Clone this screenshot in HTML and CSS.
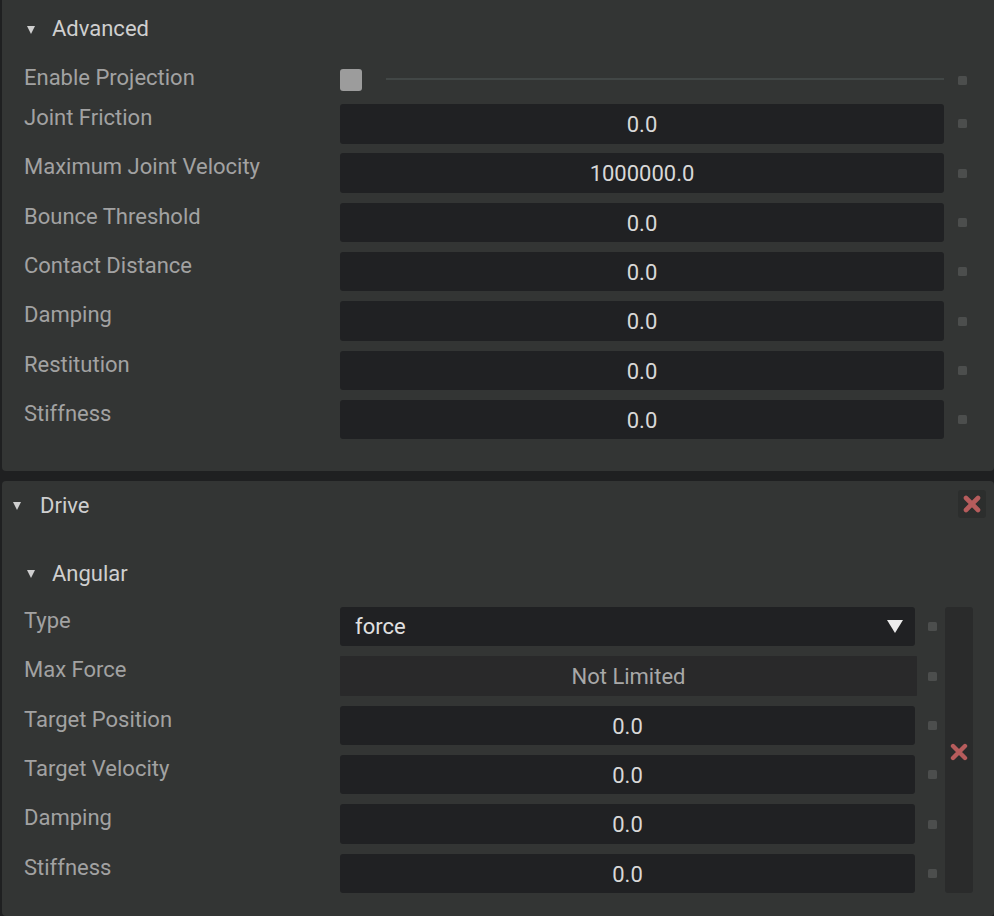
FILE: index.html
```html
<!DOCTYPE html>
<html>
<head>
<meta charset="utf-8">
<link rel="stylesheet" href="styles.css">
</head>
<body>
<div class="root">
  <section class="panel panel-adv">
    <div class="header hdr-sub"><span class="tri"></span><span>Advanced</span></div>
    <div class="row row-check">
      <div class="label">Enable Projection</div>
      <div class="ctrl"><span class="check"></span><span class="line"></span></div>
      <span class="dot"></span>
    </div>
    <div class="rows">
      <div class="row"><div class="label">Joint Friction</div><div class="field">0.0</div><span class="dot"></span></div>
      <div class="row"><div class="label">Maximum Joint Velocity</div><div class="field">1000000.0</div><span class="dot"></span></div>
      <div class="row"><div class="label">Bounce Threshold</div><div class="field">0.0</div><span class="dot"></span></div>
      <div class="row"><div class="label">Contact Distance</div><div class="field">0.0</div><span class="dot"></span></div>
      <div class="row"><div class="label">Damping</div><div class="field">0.0</div><span class="dot"></span></div>
      <div class="row"><div class="label">Restitution</div><div class="field">0.0</div><span class="dot"></span></div>
      <div class="row"><div class="label">Stiffness</div><div class="field">0.0</div><span class="dot"></span></div>
    </div>
  </section>

  <section class="panel panel-drive">
    <div class="header hdr-drive">
      <span class="tri"></span><span class="grow">Drive</span>
      <span class="xbox">
        <svg width="18" height="18" viewBox="0 0 18 18"><path d="M3 3L15 15M15 3L3 15" stroke="#b65c5c" stroke-width="4.6" stroke-linecap="round"/></svg>
      </span>
    </div>
    <div class="header hdr-sub hdr-angular"><span class="tri"></span><span>Angular</span></div>
    <div class="ang-body">
      <div class="rows ang-rows">
        <div class="row"><div class="label">Type</div><div class="field select"><span>force</span><span class="arrow"></span></div><span class="dot dot-d"></span></div>
        <div class="row"><div class="label">Max Force</div><div class="field flat">Not Limited</div><span class="dot dot-d"></span></div>
        <div class="row"><div class="label">Target Position</div><div class="field">0.0</div><span class="dot dot-d"></span></div>
        <div class="row"><div class="label">Target Velocity</div><div class="field">0.0</div><span class="dot dot-d"></span></div>
        <div class="row"><div class="label">Damping</div><div class="field">0.0</div><span class="dot dot-d"></span></div>
        <div class="row"><div class="label">Stiffness</div><div class="field">0.0</div><span class="dot dot-d"></span></div>
      </div>
      <div class="side">
        <svg width="18" height="18" viewBox="0 0 18 18"><path d="M3 3L15 15M15 3L3 15" stroke="#b65c5c" stroke-width="4.4" stroke-linecap="round"/></svg>
      </div>
    </div>
  </section>
</div>
</body>
</html>
```

FILE: styles.css
```css
html, body {
  margin: 0;
  padding: 0;
  background: #1f2021;
}
body {
  font-family: Roboto, "Liberation Sans", sans-serif;
  font-size: 22px;
  color: #a2a2a2;
}
.root {
  padding-left: 2px;
  display: flex;
  flex-direction: column;
  gap: 10px;
}
.panel {
  background: #333534;
  border-radius: 4px;
}
.panel-adv {
  border-top-left-radius: 0;
  border-top-right-radius: 0;
  padding: 15px 27px 31.5px 22px;
}
.header {
  display: flex;
  align-items: center;
  height: 28px;
  line-height: 28px;
  color: #cfcfcf;
}
.tri {
  width: 0;
  height: 0;
  border-left: 4.5px solid transparent;
  border-right: 4.5px solid transparent;
  border-top: 8px solid #cfcfcf;
  margin-right: 17px;
  margin-top: 1px;
}
.hdr-sub {
  padding-left: 3px;
}
.row {
  display: flex;
  align-items: center;
  height: 39.5px;
}
.rows {
  display: flex;
  flex-direction: column;
  gap: 9.83px;
}
.label {
  width: 316px;
  flex: none;
  align-self: flex-start;
  line-height: 28px;
  white-space: nowrap;
}
.row-check {
  height: 32px;
  margin-top: 21px;
  margin-bottom: 8px;
}
.ctrl {
  flex: 1;
  display: flex;
  align-items: center;
}
.check {
  width: 22px;
  height: 22px;
  border-radius: 3px;
  background: #9c9c9c;
  flex: none;
}
.line {
  flex: 1;
  height: 2px;
  background: #424746;
  margin-left: 24px;
  margin-top: -2px;
}
.field {
  flex: 1;
  height: 100%;
  background: #202123;
  border-radius: 3px;
  color: #d8d8d8;
  text-align: center;
  line-height: 42px;
  white-space: nowrap;
}
.dot {
  width: 9px;
  height: 9px;
  border-radius: 1.5px;
  background: #4c4e4d;
  margin-left: 14px;
  flex: none;
}
.dot-d {
  margin-left: 13px;
}
.panel-drive {
  padding: 11px 8px 22.8px 0;
}
.hdr-drive {
  padding-left: 11px;
}
.hdr-drive .tri {
  margin-right: 19px;
}
.grow {
  flex: 1;
}
.xbox {
  width: 28px;
  height: 28px;
  border-radius: 3px;
  background: #2c2e2d;
  display: flex;
  align-items: center;
  justify-content: center;
  margin-top: -4px;
}
.hdr-angular {
  margin-top: 40px;
  padding-left: 25px;
}
.ang-body {
  display: flex;
  margin-top: 19px;
  padding-left: 22px;
  padding-right: 13px;
}
.ang-rows {
  flex: 1;
}
.side {
  width: 28px;
  margin-left: 8px;
  background: #2a2b2b;
  border-radius: 3px;
  display: flex;
  align-items: center;
  justify-content: center;
}
.side svg {
  margin-top: 4px;
  margin-left: -1px;
}
.select {
  display: flex;
  align-items: center;
  justify-content: space-between;
  padding: 0 12px 0 15px;
  color: #e0e0e0;
  text-align: left;
}
.arrow {
  width: 0;
  height: 0;
  border-left: 8px solid transparent;
  border-right: 8px solid transparent;
  border-top: 13px solid #ececec;
}
.flat {
  background: #29292a;
  border-radius: 1px;
  color: #a8a8a8;
  margin-right: -2px;
}
```
